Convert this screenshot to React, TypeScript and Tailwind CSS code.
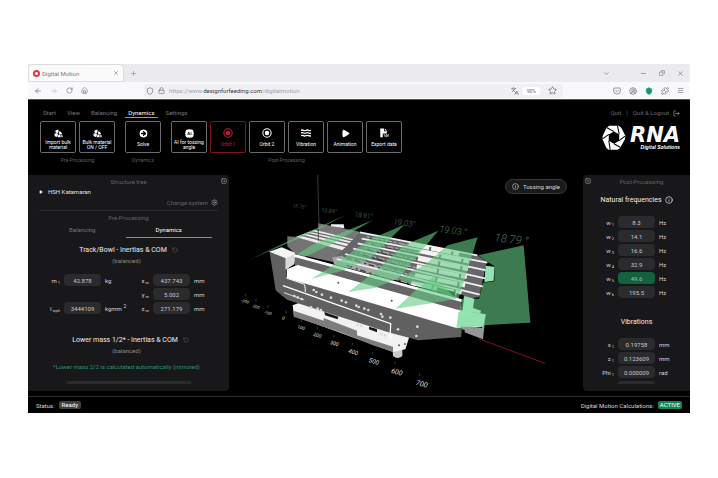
import React, { useState } from "react";
import {
  ArrowLeft,
  ArrowRight,
  ChevronDown,
  CircleArrowRight,
  CircleUserRound,
  Copy,
  House,
  Info,
  Languages,
  Lock,
  LogOut,
  Menu,
  Minus,
  Play,
  Plus,
  Pocket,
  Puzzle,
  RotateCcw,
  RotateCw,
  Settings,
  Shield,
  SquareDot,
  Star,
  X,
} from "lucide-react";

const menuItems = ["Start", "View", "Balancing", "Dynamics", "Settings"];

const frequencies = [
  { sub: "1", value: "8.3" },
  { sub: "2", value: "14.1" },
  { sub: "3", value: "16.6" },
  { sub: "4", value: "32.9" },
  { sub: "5", value: "49.6", active: true },
  { sub: "6", value: "195.5" },
];

const vibrations = [
  { name: "x", value: "0.19758", unit: "mm" },
  { name: "z", value: "0.123609", unit: "mm" },
  { name: "Phi", value: "0.000009", unit: "rad" },
];

function BulkIcon() {
  return (
    <svg viewBox="0 0 24 24" className="size-[9px]" fill="currentColor">
      <path d="M5 3l7-2v8l-5 2-4-4zM1 12l8-1 2 4-3 6-6-2zM14 6l4 1 4 6-4 2-5-3z" />
      <path d="M10 20l3-6 4 2 1 6h-8zM19 16l4 1v5h-3z" />
    </svg>
  );
}

function SolveIcon() {
  return <CircleArrowRight className="size-[11px] fill-white stroke-black" strokeWidth={3} />;
}

function AiIcon() {
  return (
    <svg viewBox="0 0 24 24" className="size-[9px]" fill="currentColor">
      <path d="M7 0h2v3H7zM11 0h2v3h-2zM15 0h2v3h-2zM7 21h2v3H7zM11 21h2v3h-2zM15 21h2v3h-2zM0 7h3v2H0zM0 11h3v2H0zM0 15h3v2H0zM21 7h3v2h-3zM21 11h3v2h-3zM21 15h3v2h-3z" />
      <rect x="2" y="2" width="20" height="20" rx="3" />
      <path d="M7 16l3-8 3 8M8 13.500h4M16 8v8" stroke="#000" strokeWidth="1.800" fill="none" />
    </svg>
  );
}

function OrbitIcon() {
  return (
    <svg viewBox="0 0 24 24" className="size-[10px]" fill="none" stroke="currentColor" strokeWidth="2.500">
      <circle cx="12" cy="12" r="10" />
      <circle cx="12" cy="12" r="4" fill="currentColor" />
    </svg>
  );
}

function VibrationIcon() {
  return (
    <svg viewBox="0 0 30 24" className="h-2 w-[10px]" fill="none" stroke="currentColor" strokeWidth="4">
      <path d="M0 4q4-2 7.500 0t7.500 0 7.500 0 7.500 0M0 12q4-2 7.500 0t7.500 0 7.500 0 7.500 0M0 20q4-2 7.500 0t7.500 0 7.500 0 7.500 0" />
    </svg>
  );
}

function ExportIcon() {
  return (
    <svg viewBox="0 0 24 24" className="size-[10px]" fill="currentColor">
      <path d="M3 1h9v7h7v5H9v9H3z" />
      <path d="M14 1l5 5h-5z" />
      <path d="M11 16h3v5M17 16v5h2q2-2 0-5zM22 21v-5h2" stroke="currentColor" strokeWidth="1.600" fill="none" />
    </svg>
  );
}

const toolGroups = [
  {
    label: "Pre-Processing",
    tools: [
      { label: "Import bulk material", icon: <BulkIcon /> },
      { label: "Bulk material ON / OFF", icon: <BulkIcon /> },
    ],
  },
  {
    label: "Dynamics",
    tools: [{ label: "Solve", icon: <SolveIcon /> }],
  },
  {
    label: "Post-Processing",
    tools: [
      { label: "AI for tossing angle", icon: <AiIcon /> },
      { label: "Orbit 1", icon: <OrbitIcon />, active: true },
      { label: "Orbit 2", icon: <OrbitIcon /> },
      { label: "Vibration", icon: <VibrationIcon /> },
      { label: "Animation", icon: <Play className="size-[9px] fill-white" /> },
      { label: "Export data", icon: <ExportIcon /> },
    ],
  },
];

function BrowserBar() {
  return (
    <div className="border-b border-[#55555a] text-[#66666a]">
      <div className="flex h-[18px] items-center bg-[#ebebef]">
        <div className="flex h-full w-24 items-center gap-[2px] rounded-t-sm border border-[#dcdce0] bg-[#fafafb] px-1 text-[6px]">
          <span className="size-[7px] rounded-full border-2 border-[#d33a4a]" />
          <span className="flex-1 text-[#77777d]">Digital Motion</span>
          <button aria-label="Close tab">
            <X className="size-[6px]" />
          </button>
        </div>
        <button aria-label="New tab" className="ml-[6px]">
          <Plus className="size-[7px] text-[#88888d]" />
        </button>
        <div className="ml-auto flex items-center gap-3 pr-[6px]">
          <ChevronDown className="mr-[18px] size-[7px]" />
          <button aria-label="Minimize">
            <Minus className="size-[7px]" />
          </button>
          <button aria-label="Restore">
            <Copy className="size-[6px] -scale-x-100" />
          </button>
          <button aria-label="Close">
            <X className="size-[7px]" />
          </button>
        </div>
      </div>
      <div className="flex h-[17px] items-center bg-[#f9f9fb] px-[6px]">
        <nav className="flex w-[110px] items-center gap-2">
          <ArrowLeft className="size-2" />
          <ArrowRight className="size-2 text-[#c0c0c6]" />
          <RotateCw className="size-[7px]" />
          <House className="size-[7px]" />
        </nav>
        <div className="flex h-[14px] flex-1 items-center gap-1 rounded-sm bg-[#f0f0f4] px-[2px]">
          <Shield className="size-2" />
          <Lock className="size-[7px]" />
          <p className="flex-1 text-[6px] text-[#a0a0a6]">
            https://www.<span className="text-[#38383d]">designforfeeding.com</span>/digitalmotion
          </p>
          <Languages className="size-2" />
          <span className="rounded-xs bg-white px-1 text-[5px] leading-[8px]">90%</span>
          <Star className="mx-1 size-[9px]" />
        </div>
        <div className="ml-[50px] flex items-center gap-2">
          <Pocket className="size-2" />
          <CircleUserRound className="size-2" />
          <Shield className="size-2 fill-[#149a6c] text-[#149a6c]" />
          <Puzzle className="size-2" />
          <Menu className="size-[7px]" />
        </div>
      </div>
    </div>
  );
}

function Logo() {
  return (
    <div className="flex items-center gap-1 text-white">
      <svg viewBox="0 0 68 72" className="h-[25px] w-6">
        <path d="M20 2h28l7 6 12 24-2 10-14 25-7 4H19l-7-5L1 41v-9L13 8z" fill="#fff" />
        <path d="M34 19l15 8v18l-15 9-15-9V27z" fill="#000" />
        <path d="M34 19L14 8M49 27L44 2M49 45l17-13M34 54l19 11M19 45l4 26M19 27L1 40" fill="none" stroke="#000" strokeWidth="3" />
      </svg>
      <div className="flex flex-col items-end">
        <span className="font-['DejaVu_Sans',sans-serif] text-[21px] leading-[18px] font-bold italic">RNA</span>
        <span className="font-['Liberation_Sans',sans-serif] text-[5px] leading-[6px] font-bold italic">Digital Solutions</span>
      </div>
    </div>
  );
}

function Header() {
  const [tab, setTab] = useState("Dynamics");

  return (
    <header className="flex items-start justify-between pt-2 pr-[10px] pb-3 pl-3">
      <div>
        <nav className="flex gap-[5px] text-[6px] leading-[9px] text-[#77777a]">
          {menuItems.map((item) => (
            <button
              key={item}
              onClick={() => setTab(item)}
              className={
                item === tab
                  ? "border-b border-[#9a9a9a] px-[3px] text-white"
                  : "border-b border-transparent px-[3px]"
              }
            >
              {item}
            </button>
          ))}
        </nav>
        <div className="mt-[3px] flex gap-[10px]">
          {toolGroups.map((group) => (
            <div key={group.label}>
              <div className="flex gap-[3px]">
                {group.tools.map((tool) => (
                  <button
                    key={tool.label}
                    className={
                      tool.active
                        ? "flex h-8 w-9 flex-col items-center rounded-xs border border-[#7d1222] pt-[6px] text-[5px] leading-[5px] text-[#c81e3a]"
                        : "flex h-8 w-9 flex-col items-center rounded-xs border border-[#6b6b6d] pt-[6px] text-[5px] leading-[5px] text-white"
                    }
                  >
                    <span className="flex h-[10px] items-center">{tool.icon}</span>
                    <span className="flex h-[13px] items-center">{tool.label}</span>
                  </button>
                ))}
              </div>
              <p className="mt-1 text-center text-[5px] leading-[6px] text-[#5c5c60]">{group.label}</p>
            </div>
          ))}
        </div>
      </div>
      <div className="flex flex-col items-end gap-[7px]">
        <div className="flex items-center gap-[5px] text-[6px] leading-[10px] text-[#6c6c70]">
          <a href="#quit">Quit</a>
          <span>|</span>
          <a href="#logout" className="flex items-center gap-1">
            Quit &amp; Logout <LogOut className="size-[7px] text-[#b5b5b8]" />
          </a>
        </div>
        <Logo />
      </div>
    </header>
  );
}

type FieldProps = {
  id: string;
  name: string;
  sub: string;
  value: string;
  unit: React.ReactNode;
  active?: boolean;
};

function Field({ id, name, sub, value, unit, active }: FieldProps) {
  return (
    <div className="flex h-[14px] items-center text-[6px] text-[#d5d5d8]">
      <label htmlFor={id} className="w-[18px] pr-1 text-right whitespace-nowrap">
        {name}
        <sub className="text-[4px]"> {sub}</sub>
      </label>
      <input
        id={id}
        defaultValue={value}
        className={
          active
            ? "h-3 w-[37px] rounded-sm bg-[#14613f] text-center text-[#a3b8ae]"
            : "h-3 w-[37px] rounded-sm bg-[#2b2b2d] text-center text-[#c8c8cb]"
        }
      />
      <span className="w-6 pl-1">{unit}</span>
    </div>
  );
}

function StructurePanel() {
  return (
    <aside className="relative flex w-[201px] flex-col rounded-r-sm bg-[#18181b] px-[11px] pt-[3px] pb-[7px]">
      <button aria-label="Collapse structure tree" className="absolute top-[3px] right-[2px]">
        <SquareDot className="size-[6px] text-[#c5c5c8]" />
      </button>
      <h2 className="text-center text-[6px] leading-[8px] text-[#626266]">Structure tree</h2>
      <div className="flex items-center gap-[5px] text-[6px] leading-[11px] text-[#e2e2e4]">
        <Play className="size-1 fill-white text-white" />
        HSH Katamaran
      </div>
      <button className="flex items-center gap-[3px] self-end text-[6px] leading-[11px] text-[#626266]">
        Change system <Settings className="size-[7px] text-[#a5a5a8]" />
      </button>
      <div className="mt-[2px] border-t border-[#2a2a2d] pt-[3px] text-center text-[6px] leading-[8px] text-[#626266]">
        Pre-Processing
      </div>
      <div className="mr-[6px] flex text-[6px] leading-[15px] text-[#77777a]">
        <button className="flex-1 border-b border-transparent">Balancing</button>
        <button className="flex-1 border-b border-[#8d8d90] text-white">Dynamics</button>
      </div>
      <h3 className="mt-[7px] flex items-center justify-center gap-[5px] text-[7px] leading-[10px] text-[#ececee]">
        Track/Bowl - Inertias &amp; COM <RotateCcw className="size-[6px] text-[#626266]" />
      </h3>
      <p className="mt-[2px] pr-1 text-center text-[6px] leading-[8px] text-[#88888c]">(balanced)</p>
      <div className="mt-2 flex justify-between pr-1 pl-[7px]">
        <div className="flex flex-col justify-between">
          <Field id="mass" name="m" sub="1" value="42.878" unit="kg" />
          <Field id="inertia" name="I" sub="wph" value="3444109" unit={<span className="whitespace-nowrap">kgmm <sup className="text-[5px]">2</sup></span>} />
        </div>
        <div>
          <Field id="com-x" name="x" sub="m" value="437.743" unit="mm" />
          <Field id="com-y" name="y" sub="m" value="5.002" unit="mm" />
          <Field id="com-z" name="z" sub="m" value="271.179" unit="mm" />
        </div>
      </div>
      <h3 className="mt-5 flex items-center justify-center gap-[5px] pl-1 text-[7px] leading-[10px] text-[#ececee]">
        Lower mass 1/2* - Inertias &amp; COM <RotateCcw className="size-[6px] text-[#626266]" />
      </h3>
      <p className="mt-[2px] pr-1 text-center text-[6px] leading-[8px] text-[#88888c]">(balanced)</p>
      <p className="mt-2 pr-1 text-center text-[6px] leading-[8px] text-[#25966d]">
        *Lower mass 2/2 is calculated automatically (mirrored)
      </p>
      <div className="mx-auto mt-[10px] h-[3px] w-[124px] bg-[#2b2b2d]" />
    </aside>
  );
}

function ResultPanel() {
  return (
    <aside className="relative flex w-[107px] flex-col items-center rounded-l-sm bg-[#18181b] pt-[3px] pb-[7px]">
      <button aria-label="Collapse post-processing" className="absolute top-[3px] left-[2px]">
        <SquareDot className="size-[6px] text-[#c5c5c8]" />
      </button>
      <h2 className="pl-[10px] text-[6px] leading-[8px] text-[#626266]">Post-Processing</h2>
      <h3 className="mt-[9px] flex items-center gap-[3px] text-[7px] leading-[10px] text-[#ececee]">
        Natural frequencies <Info className="size-2" />
      </h3>
      <div className="mt-[10px] pl-[6px]">
        {frequencies.map((f) => (
          <Field key={f.sub} id={"w" + f.sub} name="w" sub={f.sub} value={f.value} unit="Hz" active={f.active} />
        ))}
      </div>
      <h3 className="mt-[18px] text-[7px] leading-[10px] text-[#ececee]">Vibrations</h3>
      <div className="mt-[10px] pl-[6px]">
        {vibrations.map((v) => (
          <Field key={v.name} id={v.name} name={v.name} sub="1" value={v.value} unit={v.unit} />
        ))}
      </div>
      <div className="mt-[2px] h-[3px] w-[37px] rounded-t-sm bg-[#2b2b2d]" />
    </aside>
  );
}

const rails = [
  { x1: 345, y1: 97, x2: 697, y2: 166 },
  { x1: 350, y1: 116, x2: 727, y2: 188 },
  { x1: 338, y1: 130, x2: 724, y2: 211 },
  { x1: 325, y1: 146, x2: 720, y2: 235 },
  { x1: 300, y1: 162, x2: 715, y2: 260 },
  { x1: 275, y1: 177, x2: 704, y2: 284 },
];

const angles = [
  { x: 142, y: 22, size: 15, text: "18.76°" },
  { x: 228, y: 36, size: 17, text: "18.84°" },
  { x: 328, y: 50, size: 20, text: "18.91°" },
  { x: 444, y: 74, size: 24, text: "19.03°" },
  { x: 582, y: 97, size: 28, text: "19.03 °" },
  { x: 748, y: 124, size: 34, text: "18.79 °" },
];

const ticks = [
  { x: -12, y: 305, size: 12, text: "-300" },
  { x: 20, y: 321, size: 12, text: "-200" },
  { x: 56, y: 340, size: 12, text: "-100" },
  { x: 110, y: 358, size: 14, text: "0" },
  { x: 156, y: 384, size: 14, text: "100" },
  { x: 204, y: 407, size: 15, text: "200" },
  { x: 254, y: 432, size: 16, text: "300" },
  { x: 309, y: 458, size: 18, text: "400" },
  { x: 370, y: 486, size: 19, text: "500" },
  { x: 437, y: 518, size: 21, text: "600" },
  { x: 511, y: 554, size: 22, text: "700" },
];

// bolt positions on the front plate
const bolts = [
  [206, 270], [214, 276], [231, 284], [258, 293], [290, 302], [303, 307], [334, 317], [341, 321],
  [358, 326], [370, 330], [408, 342], [412, 350], [436, 353], [459, 388], [408, 402], [420, 406],
  [338, 374], [349, 378], [218, 326], [228, 330], [148, 288], [158, 292], [170, 297], [198, 322],
  [517, 380], [514, 408],
];

function Viewport() {
  return (
    <main className="relative min-w-0 flex-1">
      <svg viewBox="0 0 1062 663" className="block w-full" role="img" aria-label="Feeder model with tossing angles">
        <g transform="translate(48 75)">
          <path d="M218 -78L222 75" stroke="#555" strokeWidth="2" />
          <path d="M700 416L900 490" stroke="#7c1220" strokeWidth="3" />

          {/* base rail and feet */}
          <path d="M240 352l50 18v24l-50-16zM335 388l60 18v22l-60-20z" fill="#555" />
          <path d="M148 325h22v18q-11 9-22-2zM442 440h30v28q-14 12-28 0z" fill="#c9c9c9" />
          <path d="M143 316l20-8 332 96-14 44-36 8-60-22-238-86z" fill="#f2f2f2" />
          <path d="M146 332l90 30v-8l100 38v14l108 34v16l-60-20-90-36-148-50z" fill="#7d7d7d" />

          {/* rear plate and tray */}
          <path d="M220 70l127 26 5 36-132-30z" fill="#777" />
          <path d="M258 73h38l2 12-40-6z" fill="#eee" />
          <path d="M127 109l28 2 140 40v42l-145-32-23-22z" fill="#737373" />
          <path d="M152 111l56-22 138 34-54 28z" fill="#ededed" />
          <path d="M167 105l144 37M182 99l145 35M196 94l144 33" stroke="#6d6d6d" strokeWidth="4" />
          <path d="M220 78v45" stroke="#555" strokeWidth="3" />

          {/* tracks */}
          <path d="M345 97l352 68 28 20-22 106-50 8-390-118z" fill="#66666a" />
          <path d="M262 172l30-5 15 12 50 4 80 30 40 10-30 18-180-48z" fill="#a4a4a4" />
          {rails.map((r) => (
            <g key={r.y1}>
              <line x1={r.x1 + 20} y1={r.y1 + 13} x2={r.x2 - 190} y2={r.y2 - 27} stroke="#a8a8a8" strokeWidth="4" strokeDasharray="9 7 20 5" />
              <line x1={r.x1 + 30} y1={r.y1 + 19} x2={r.x2 - 210} y2={r.y2 - 25} stroke="#38383a" strokeWidth="4" strokeDasharray="17 12 6 8" />
              <line x1={r.x2 - 205} y1={r.y2 - 35} x2={r.x2 - 55} y2={r.y2 - 4} stroke="#f4f4f4" strokeWidth="13" strokeDasharray="62 6" />
              <line x1={r.x1} y1={r.y1} x2={r.x2} y2={r.y2} stroke="#f1f1f1" strokeWidth="5" />
            </g>
          ))}
          <path d="M575 262l55 14v18l-55-15zM634 280l22 6v14h-20z" fill="#090909" />

          {/* far planes, cut off by the main beam */}
          <g fill="#66cc85" fillOpacity="0.600">
            <path d="M12 180l108-52 183-84L200 98z" />
            <path d="M86 206l120-74 178-72-130 76-154 72z" />
            <path d="M698 112l-90 24-70 60-80 40 182 60z" />
          </g>

          {/* main beam */}
          <path d="M148 164l500 134v40l-130-36-368-104z" fill="#666" />
          <path d="M148 162l502 136v8L146 170z" fill="#fff" />
          <path d="M74 157l48 16 4 60 530 152-8 26-128 10-90-24-304-98-34-28z" fill="#606060" />
          <path d="M126 207l32-12 480 134 84 14-14 38-76 2-506-148z" fill="#fff" />
          <path d="M646 374l64 10 12-40-8 74-58-22z" fill="#969696" />
          <path d="M72 155l38-13 40 16-2 34-26 17v-34z" fill="#f4f4f4" />
          <path d="M122 176l26-14-1 30-25 16z" fill="#d8d8d8" />
          <path d="M650 388l9 2v18l-10 4z" fill="#050505" />

          {/* front plate outline */}
          <path d="M124 234l52 18q5 2 5 24" fill="none" stroke="#fff" strokeWidth="3" />
          <path d="M114 257l323 114-2 46" fill="none" stroke="#fff" strokeWidth="4" />
          <path d="M117 278l60 22" fill="none" stroke="#ddd" strokeWidth="3" />
          <path d="M238 336l42 14-2 8-38-12zM372 380l24 7v10l-24-9z" fill="#181818" />
          {bolts.map(([x, y]) => (
            <circle key={x + "-" + y} cx={x} cy={y} r="4" fill="#d9d9d9" />
          ))}
          {[[280, 248], [440, 302], [480, 432], [655, 360], [704, 352], [462, 436]].map(([x, y]) => (
            <circle key={x} cx={x} cy={y} r="3" fill="#555" />
          ))}

          {/* near planes */}
          <g fill="#66cc85" fillOpacity="0.600">
            <path d="M478 74l-108 46-90 66-80 50 88-22 90-40z" />
            <path d="M580 92l-104 44-84 78-82 62 80-12 72-30z" />
            <path d="M566 230l-60 46-54 50 108-16 74-14z" />
            <path d="M836 136L700 166l24 18 24 14v46l-34 4-12 48-50 0-18 84 222-12z" />
          </g>
          <path d="M722 197l26 3-2 42-28 4zM658 288l30 8-4 28 24 8-2 8-54-6zM640 336l82 8-8 36-78 0z" fill="#93e3b1" />

          <g fontFamily="Roboto, sans-serif" fontStyle="italic" fontWeight="300" fill="#59725f">
            {angles.map((a) => (
              <text key={a.x} x={a.x} y={a.y} fontSize={a.size} transform={`rotate(6 ${a.x} ${a.y})`}>
                {a.text}
              </text>
            ))}
          </g>
          <g fontFamily="Roboto, sans-serif" fontStyle="italic" fill="#dedede">
            {ticks.map((t) => (
              <g key={t.text}>
                <path d={`M${t.x + 13} ${t.y - t.size - 12}v8`} stroke="#555" strokeWidth="2" />
                <text x={t.x} y={t.y} fontSize={t.size} transform={`rotate(16 ${t.x} ${t.y})`}>
                  {t.text}
                </text>
              </g>
            ))}
          </g>
        </g>
      </svg>
      <button className="absolute top-1 right-4 flex h-[15px] items-center gap-1 rounded-full border border-[#38383b] bg-[#1a1a1d] px-[6px] text-[6px] text-[#d8d8da]">
        <Info className="size-[7px]" />
        Tossing angle
      </button>
    </main>
  );
}

function StatusBar() {
  return (
    <footer className="flex h-[17px] items-center justify-between border-t border-[#2b2b2e] px-2 text-[6px] text-[#d8d8da]">
      <p className="flex items-center gap-1">
        Status: <span className="rounded-xs bg-[#414145] px-[3px] leading-[8px] text-white">Ready</span>
      </p>
      <p className="flex items-center gap-1">
        Digital Motion Calculations:
        <span className="rounded-xs bg-[#12835a] px-[2px] leading-[8px] text-white">ACTIVE</span>
      </p>
    </footer>
  );
}

export default function App() {
  return (
    <div className="min-h-screen bg-white px-7 pt-16 pb-16 font-['Roboto',sans-serif]">
      <div className="overflow-hidden bg-black">
        <BrowserBar />
        <Header />
        <div className="flex items-start">
          <StructurePanel />
          <Viewport />
          <ResultPanel />
        </div>
        <StatusBar />
      </div>
    </div>
  );
}
